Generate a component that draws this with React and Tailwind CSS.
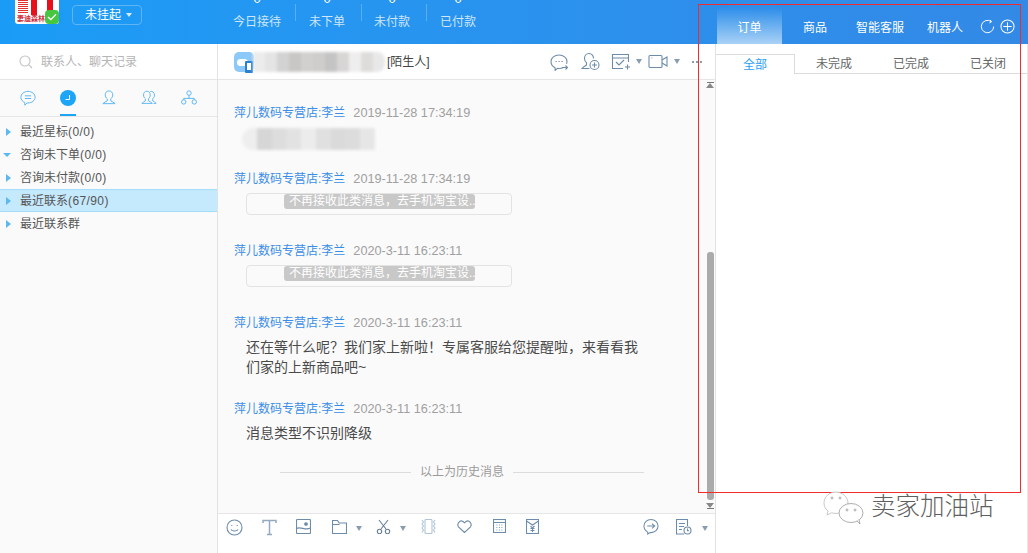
import React from 'react';

const FONT = { fontFamily: '"Liberation Sans", "Noto Sans CJK SC", sans-serif' };

const Caret = ({ className = '' }) => (
  <span className={`inline-block w-0 h-0 shrink-0 border-x-[3.5px] border-x-transparent border-t-[5px] border-t-[#8a9db0] ${className}`} />
);

const Ic = ({ children, w = 20, h = 20, vb, className = '', stroke = '#6d8cab' }) => (
  <svg width={w} height={h} viewBox={vb || `0 0 ${w} ${h}`} fill="none" stroke={stroke} strokeWidth="1.1" className={`shrink-0 ${className}`}>
    {children}
  </svg>
);

const Stat = ({ label, w }) => (
  <div className={`flex flex-col items-center ${w}`}>
    <span className="text-[13px] leading-[13px] text-white -mt-[8px]">0</span>
    <span className="text-[12px] leading-4 text-[#cfe6fb] mt-[9px]">{label}</span>
  </div>
);

const Sep = () => <div className="w-px h-[17px] bg-[#57b0f3] mt-1" />;

const TreeRow = ({ label, count, open, active }) => (
  <div className={`flex items-center h-[23px] pl-[6px] text-[12px] text-[#555] ${active ? 'bg-[#c5e9fd] border-y border-[#a5dcf8]' : ''}`}>
    {open ? (
      <span className="inline-block w-0 h-0 -ml-[3px] border-x-[4px] border-x-transparent border-t-[4px] border-t-[#5cb8ee]" />
    ) : (
      <span className="inline-block w-0 h-0 border-y-[4px] border-y-transparent border-l-[5px] border-l-[#5cb8ee]" />
    )}
    <span className="ml-[9px]">{label}</span>
    {count && <span className="tracking-[0.4px]">{count}</span>}
  </div>
);

const Name = ({ time }) => (
  <div className="flex items-center h-4 text-[12px] leading-4">
    <span className="text-[#3a8ee6]">萍儿数码专营店:李兰</span>
    <span className="text-[#a0a0a0] ml-2 text-[12.7px]">{time}</span>
  </div>
);

const Card = () => (
  <div className="ml-3 mt-[6px] w-[266px] h-[22px] border border-[#e3e3e3] rounded-sm pl-[37px]">
    <div className="bg-[#c8c8c8] text-white text-[12px] leading-[15px] rounded-[3px] w-[191px] pl-[5px] whitespace-nowrap overflow-hidden">不再接收此类消息，去手机淘宝设..</div>
  </div>
);

// mosaic that hides the customer name
const Mosaic = ({ cells, className }) => (
  <div className={`flex overflow-hidden blur-[1.5px] ${className}`}>
    {cells.map((c, i) => <div key={i} className={`h-full flex-1 ${c}`} />)}
  </div>
);

const nameCells = ['bg-[#ececec]', 'bg-[#e4e4e4]', 'bg-[#d2d2d2]', 'bg-[#c9c7c6]', 'bg-[#d2d0cf]', 'bg-[#cfcdcc]', 'bg-[#c4c4c4]', 'bg-[#d8d6d5]', 'bg-[#efeeee]', 'bg-[#dedcdb]', 'bg-[#e8e8e8]'];
const bubbleCells = ['bg-[#eeeeee]', 'bg-[#d6d6d6]', 'bg-[#dddddd]', 'bg-[#e2e2e2]', 'bg-[#ececec]', 'bg-[#e0e0e0]', 'bg-[#dadada]', 'bg-[#dcdcdc]', 'bg-[#e6e6e6]'];

export default function App() {
  return (
    <div className="relative w-[1028px] h-[553px] overflow-hidden bg-white flex flex-col" style={FONT}>
      {/* top bar */}
      <div className="h-[44px] shrink-0 flex bg-gradient-to-r from-[#1a9cf6] to-[#3389e6] overflow-hidden">
        <div className="w-[59px] pl-[15px] shrink-0">
          <div className="relative w-[44px] h-[24px] bg-white rounded-b-[3px] overflow-hidden">
            <div className="flex h-[15px] pl-[3px] gap-[3px]">
              <div className="w-[10px] flex flex-col gap-[1px]">
                <div className="h-px bg-[#e03030]" />
                <div className="h-px bg-[#e03030]" />
                <div className="h-px bg-[#e03030]" />
                <div className="h-px bg-[#e03030]" />
                <div className="h-px bg-[#e03030]" />
                <div className="h-px bg-[#e03030]" />
                <div className="h-px bg-[#e03030]" />
              </div>
              <div className="w-[6px] bg-[#e8101a]" />
              <div className="w-[4px]" />
              <div className="w-[6px] bg-[#e8101a]" />
            </div>
            <div className="text-[7px] leading-[8px] text-[#d03040] font-bold pl-[2px] whitespace-nowrap">妻迪森林</div>
          </div>
        </div>
        <div className="w-[14px] h-[14px] rounded-[4px] bg-[#47c640] -ml-[14px] mt-[10px] z-10 flex items-center justify-center shrink-0">
          <svg width="10" height="8" viewBox="0 0 10 8" fill="none" stroke="#fff" strokeWidth="1.3"><path d="M1 4l2.8 2.6L9 1.2" /></svg>
        </div>
        <div className="ml-[13px] mt-[5px] w-[70px] h-[20px] border border-[#5db5f5] rounded-sm flex items-center pl-[12px] gap-[5px] shrink-0">
          <span className="text-[12px] text-white">未挂起</span>
          <span className="w-0 h-0 border-x-[3px] border-x-transparent border-t-[4px] border-t-[#d5ecfd]" />
        </div>
        <div className="flex ml-[79px] items-start w-[268px] shrink-0">
          <Stat label="今日接待" w="w-[74px] pr-[2px]" />
          <Sep />
          <Stat label="未下单" w="w-[65px] pr-[3px]" />
          <Sep />
          <Stat label="未付款" w="w-[64px] pr-[4px]" />
          <Sep />
          <Stat label="已付款" w="w-[62px]" />
        </div>
        <div className="ml-[228px] mt-[8px] w-[65px] h-[36px] shrink-0 bg-gradient-to-b from-transparent to-[#a9d2f6] flex items-center justify-center text-[12px] text-white pt-[4px]">订单</div>
        <div className="flex items-center text-[12px] text-white h-full pt-[12px] shrink-0">
          <span className="w-[66px] text-center">商品</span>
          <span className="w-[64px] text-center">智能客服</span>
          <span className="w-[66px] text-center">机器人</span>
        </div>
        <div className="flex items-center gap-[5px] pt-[8px] pl-[2px]">
          <svg width="15" height="15" viewBox="0 0 17 17" fill="none" stroke="#fff" strokeWidth="1.1"><path d="M15.500 8.500A7 7 0 1 1 12.500 2.800" /><path d="M11.500 1l1.600 2.200-2.400 1.200" /></svg>
          <svg width="15" height="15" viewBox="0 0 16 16" fill="none" stroke="#fff" strokeWidth="1.1"><circle cx="8" cy="8" r="7" /><path d="M8 3.500v9M3.500 8h9" /></svg>
        </div>
      </div>

      <div className="flex flex-1 min-h-0">
        {/* contacts */}
        <div className="w-[218px] shrink-0 border-r border-[#e2e2e2] bg-[#fafafa] flex flex-col">
          <div className="h-[36px] shrink-0 bg-white border-b-[1.5px] border-[#e6e6e6] flex items-center pl-[19px]">
            <svg width="14" height="14" viewBox="0 0 14 14" fill="none" stroke="#c4c4c4" strokeWidth="1.1"><circle cx="6" cy="6" r="5" /><path d="M9.800 9.800L13 13" /></svg>
            <span className="text-[12px] text-[#b5b5b5] ml-[8px]">联系人、聊天记录</span>
          </div>
          <div className="h-[37px] shrink-0 border-b border-[#e6e6e6] flex items-start pt-[10px] pl-[20px]">
            <Ic w={16} h={17} vb="0 0 18 19" stroke="#5cb6f2" className="mr-[24px]">
              <path d="M9 1.500c4.400 0 8 2.900 8 6.600s-3.600 6.400-8 6.400l-1 .1-2.600 2.400v-3C3 13 1 11 1 8.100 1 4.400 4.600 1.500 9 1.500z" />
              <path d="M5.500 6.500h7M5.500 9.500h7" />
            </Ic>
            <div className="relative w-[16px] h-[26px] mr-[26px] shrink-0">
              <div className="w-[16px] h-[16px] rounded-full bg-[#1da5f8] flex items-center justify-center">
                <svg width="8" height="8" viewBox="0 0 8 8" fill="none" stroke="#fff" strokeWidth="1"><path d="M5.500 1v4.500H1.500" /></svg>
              </div>
              <div className="absolute left-0 bottom-0 w-[16px] h-[2px] bg-[#1da5f8]" />
            </div>
            <Ic w={14} h={15} vb="0 0 16 17" stroke="#5cb6f2" className="mr-[25px]">
              <path d="M8 1c2.700 0 4.300 2 4.300 4.500 0 2-1 3.500-2.300 4.500v2.500c1.500.7 3.500 1.500 5 3H1c1.500-1.500 3.500-2.300 5-3V10C4.700 9 3.700 7.500 3.700 5.500 3.700 3 5.300 1 8 1z" />
            </Ic>
            <Ic w={16} h={15} vb="0 0 19 17" stroke="#5cb6f2" className="mr-[24px]">
              <path d="M7 1c2.500 0 4 2 4 4.500 0 2-.9 3.500-2.100 4.500v2.500c1.400.7 3.100 1.500 4.600 3H1c1.400-1.500 3-2.300 4.200-3V10C4 9 3 7.500 3 5.500 3 3 4.500 1 7 1z" />
              <path d="M11 1.300c2.500-.6 5 1.300 5 4.200 0 2-.9 3.500-2.100 4.500v2.500c1.400.7 2.800 1.500 4.100 3h-3" />
            </Ic>
            <Ic w={16} h={15} vb="0 0 18 17" stroke="#5cb6f2">
              <circle cx="9" cy="3.500" r="2.500" /><circle cx="3" cy="13.500" r="2.500" /><circle cx="15" cy="13.500" r="2.500" />
              <path d="M9 6v3.500M3 11V9.500h12V11" />
            </Ic>
          </div>
          <div className="pt-[3px]">
            <TreeRow label="最近星标" count="(0/0)" />
            <TreeRow label="咨询未下单" count="(0/0)" open />
            <TreeRow label="咨询未付款" count="(0/0)" />
            <TreeRow label="最近联系" count="(67/90)" active />
            <TreeRow label="最近联系群" />
          </div>
        </div>

        {/* chat */}
        <div className="w-[498px] shrink-0 flex flex-col border-r border-[#e2e2e2]">
          <div className="h-[36px] shrink-0 border-b-[1.5px] border-[#e6e6e6] flex items-center pl-[16px] bg-white">
            <div className="relative w-[20px] h-[20px] bg-[#8cc8f8] rounded-[5px] shrink-0">
              <div className="absolute left-[3px] top-[7px] w-[11px] h-[7px] bg-white rounded-full" />
              <div className="absolute right-[1px] -bottom-[1px] w-[8px] h-[12px] rounded-[1px] border-[2px] border-b-[3px] border-[#2b7fd0] bg-white" />
            </div>
            <Mosaic cells={nameCells} className="w-[132px] h-[20px] -ml-px rounded-r-[8px]" />
            <span className="text-[12px] text-[#444] ml-[2px]">[陌生人]</span>
            <div className="flex items-center ml-auto pr-[13px]">
              <Ic w={18} h={18} className="mr-[13px]">
                <path d="M13 14.800c-1.200.5-2.600.7-4 .7l-1.500-.1-2.400 2v-2.600C2.600 13.600 1 11.300 1 8.500 1 4.900 4.600 2 9 2s8 2.900 8 6.500c0 .8-.2 1.600-.5 2.300" />
                <path d="M5.500 8.500h1.200M8.500 8.500h1.200M11.500 8.500h1.200M12 14.500h5.500M15.500 12.500l2 2-2 2" />
              </Ic>
              <Ic w={19} h={19} className="mr-[11px]">
                <path d="M12.500 6.500c0-2.800-2-5-4.500-5S3.500 3.700 3.500 6.500c0 1.700.8 3.200 2 4.100V13C4 14 2.500 14.500 1 16.500h7.500" />
                <circle cx="13.500" cy="13" r="4.500" /><path d="M13.500 10.500v5M11 13h5" />
              </Ic>
              <Ic w={19} h={17} className="mr-[6px]">
                <path d="M17.500 9V1.500h-16v14H12M1.500 5h16M5 9l3 3 5-5M14 14h5M16.500 11.500v5" />
              </Ic>
              <Caret className="mr-[6px]" />
              <Ic w={20} h={15} className="mr-[6px]">
                <rect x="1" y="1.500" width="13" height="12" rx="1" /><path d="M14 6l5-3v9l-5-3M3.500 4h.8" />
              </Ic>
              <Caret className="mr-[12px]" />
              <span className="flex gap-[2px] mt-[1px]">
                <span className="w-[2px] h-[2px] bg-[#8a9db0]" />
                <span className="w-[2px] h-[2px] bg-[#8a9db0]" />
                <span className="w-[2px] h-[2px] bg-[#8a9db0]" />
              </span>
            </div>
          </div>

          <div className="flex-1 min-h-0 flex bg-[#fafafa]">
            <div className="flex-1 pt-[25px] pl-[16px] min-w-0">
              <Name time="2019-11-28 17:34:19" />
              <Mosaic cells={bubbleCells} className="ml-[8px] mt-[7px] w-[133px] h-[22px] rounded-l-[11px]" />
              <div className="mt-[21px]"><Name time="2019-11-28 17:34:19" /></div>
              <Card />
              <div className="mt-[28px]"><Name time="2020-3-11 16:23:11" /></div>
              <Card />
              <div className="mt-[28px]"><Name time="2020-3-11 16:23:11" /></div>
              <p className="ml-3 mt-[6px] w-[400px] text-[14px] leading-5 text-[#4a4a4a]">还在等什么呢？我们家上新啦！专属客服给您提醒啦，来看看我们家的上新商品吧~</p>
              <div className="mt-[24px]"><Name time="2020-3-11 16:23:11" /></div>
              <p className="ml-3 mt-[6px] text-[14px] leading-5 text-[#4a4a4a]">消息类型不识别降级</p>
              <div className="flex items-center mt-[20px] ml-[46px] w-[364px]">
                <div className="flex-1 h-px bg-[#dcdcdc]" />
                <span className="text-[12px] text-[#9a9a9a] mx-[9px]">以上为历史消息</span>
                <div className="flex-1 h-px bg-[#dcdcdc]" />
              </div>
            </div>
            <div className="w-[10px] shrink-0 flex flex-col items-center pt-[2px] pb-[3px]">
              <div className="w-[8px] h-[7px] flex flex-col items-center">
                <div className="w-[7px] h-px bg-[#777]" />
                <span className="w-0 h-0 border-x-[4px] border-x-transparent border-b-[5px] border-b-[#888]" />
              </div>
              <div className="flex-1" />
              <div className="w-[7px] h-[248px] bg-[#ababab] rounded-[3px]" />
              <div className="w-[8px] h-[7px] mt-[3px] flex flex-col items-center">
                <span className="w-0 h-0 border-x-[4px] border-x-transparent border-t-[5px] border-t-[#888]" />
                <div className="w-[7px] h-px bg-[#777]" />
              </div>
            </div>
          </div>

          <div className="h-[40px] shrink-0 border-t-[1.5px] border-[#e6e6e6] bg-white flex items-start pt-[5px] pl-[8px]">
            <Ic w={17} h={17} className="mr-[19px]">
              <circle cx="8.500" cy="8.500" r="7.500" /><path d="M5 10.500c1 2 6 2 7 0M5.800 6v1M11.200 6v1" />
            </Ic>
            <Ic w={15} h={17} stroke="#93aac1" className="mr-[19px]" >
              <path d="M1 4V1.500h13V4M7.500 1.500V15.500M5 15.500h5" strokeWidth="1.500" />
            </Ic>
            <Ic w={15} h={15} className="mr-[21px]">
              <rect x=".5" y=".5" width="14" height="14" rx="1" /><path d="M.5 9.500c4-2.500 9 2.500 14-.5" /><circle cx="10" cy="5" r="1.300" fill="#6d8cab" />
            </Ic>
            <Ic w={15} h={14} className="mr-[9px] mt-[1px]">
              <path d="M.5 13.500V.5h5l1.500 2.500h7.500v10.500zM.5 4.500h7" />
            </Ic>
            <Caret className="mt-[7px] mr-[14px]" />
            <Ic w={15} h={15} stroke="#66809a" className="mr-[9px]">
              <path d="M3 1l7 9M12 1L5 10" /><circle cx="3.500" cy="12.500" r="2.200" /><circle cx="11.500" cy="12.500" r="2.200" />
            </Ic>
            <Caret className="mt-[7px] mr-[14px]" />
            <Ic w={17} h={15} stroke="#b0c5d8" className="mr-[20px]">
              <rect x="5" y=".5" width="7" height="14" rx="1" /><path d="M2 1l1.500 2L2 5l1.500 2L2 9l1.500 2L2 13.500M15 1l-1.500 2L15 5l-1.500 2L15 9l-1.500 2L15 13.500" />
            </Ic>
            <Ic w={15} h={13} className="mr-[21px] mt-[1px]">
              <path d="M7.500 12.500L1.500 6.800C-.5 4 2.800-.5 6 1.500l1.500 1.300L9 1.500c3.200-2 6.500 2.500 4.500 5.300z" />
            </Ic>
            <Ic w={13} h={14} className="mr-[20px]">
              <rect x=".5" y=".5" width="12" height="13" /><path d="M.5 3.500h12M3.500 6h.8M6 6h.8M8.500 6h.8M3.500 8.500h.8M6 8.500h.8M8.500 8.500h.8M3.500 11h.8M6 11h.8M8.500 11h.8" />
            </Ic>
            <Ic w={13} h={15}>
              <rect x=".5" y=".5" width="12" height="14" /><path d="M.5 2l6 4 6-4M4.500 7l2 2 2-2M4.500 9.500h4M4.500 11.500h4M6.500 9v4" />
            </Ic>
            <Ic w={16} h={17} vb="0 0 17 17" className="ml-[104px] mr-[17px] -mt-[1px]">
              <path d="M8.500 1c4.200 0 7.500 3 7.500 7s-3.300 7-7.500 7l-1 0-2.500 1.500v-2C2.500 13 1 11 1 8c0-4 3.300-7 7.500-7zM4.500 8h8M9.500 5.500L12.500 8 9.500 10.500" />
            </Ic>
            <Ic w={16} h={16} className="mr-[10px]">
              <path d="M8 15H.5V.5h11V7M3 4.500h6M3 7.500h5M3 10.500h3" /><circle cx="11.500" cy="11.500" r="3.500" /><path d="M11.500 9.500v2.200h1.600" />
            </Ic>
            <Caret className="mt-[7px]" />
          </div>
        </div>

        {/* right panel */}
        <div className="flex-1 min-w-0 border-r border-[#e6e6e6] bg-white">
          <div className="flex pt-[10px]">
            <div className="w-[79px] h-[20px] border-t border-r border-[#dcdcdc] flex items-center justify-center text-[12px] text-[#2d9ff0]">全部</div>
            <div className="flex-1 flex items-center h-[20px] border-b border-[#dcdcdc] text-[12px] text-[#666]">
              <span className="w-[78px] text-center">未完成</span>
              <span className="w-[76px] text-center">已完成</span>
              <span className="w-[78px] text-center">已关闭</span>
            </div>
          </div>
        </div>
      </div>

      {/* red annotation drawn on top of the screenshot */}
      <div className="absolute left-[698px] top-[4px] w-[323px] h-[489px] border border-[#f02c2c] pointer-events-none" />

      {/* watermark */}
      <div className="absolute left-[823px] top-[489px] flex items-center pointer-events-none">
        <svg width="42" height="36" viewBox="0 0 42 36" fill="white" stroke="#999" strokeWidth=".8">
          <path d="M13 3C6.400 3 1 7.700 1 14c0 3.300 1.500 6 4 8l-1 4 4.500-2.200c1.500.4 3 .6 4.500.6 6.600 0 12-4.800 12-10.400S19.600 3 13 3z" stroke="#bbb" />
          <ellipse cx="28" cy="24" rx="12" ry="9.500" />
          <path d="M34 32l3 3-1-4.500" />
          <circle cx="9" cy="9" r="1" /><circle cx="17" cy="9" r="1" /><circle cx="24" cy="21" r="1" /><circle cx="32" cy="21" r="1" />
        </svg>
        <span className="ml-[6px] text-[24.5px] leading-none text-[#5f5f5f] font-light">卖家加油站</span>
      </div>
    </div>
  );
}
